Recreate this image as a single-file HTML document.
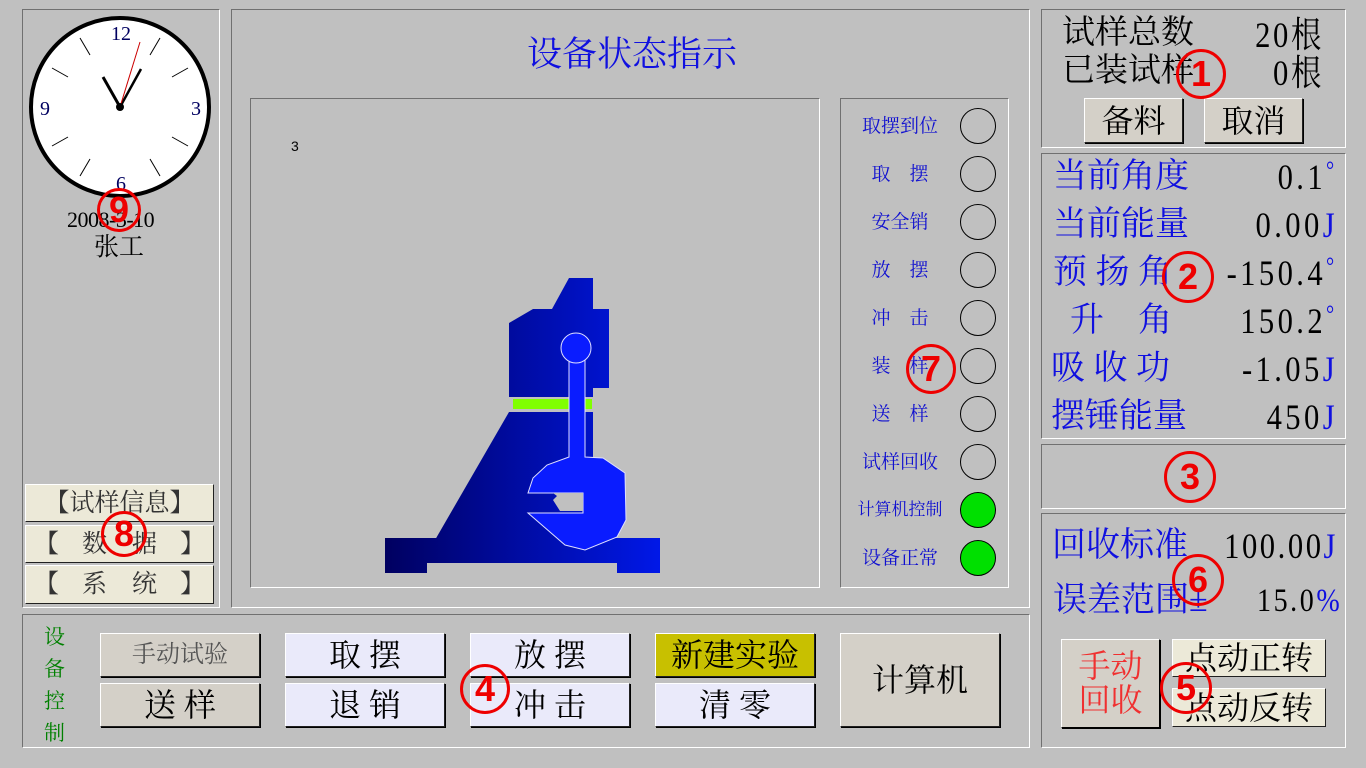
<!DOCTYPE html>
<html><head><meta charset="utf-8"><style>
*{margin:0;padding:0;box-sizing:border-box}
body{width:1366px;height:768px;background:#c0c0c0;position:relative;overflow:hidden;font-family:"Liberation Serif","Noto Serif CJK SC",serif}
.p{position:absolute;border:1px solid;border-color:#707070 #fff #fff #707070}
.t{position:absolute;white-space:nowrap;line-height:1}
.v{position:absolute;white-space:nowrap;line-height:1;right:28px;font-size:36px;transform:scaleX(0.85);transform-origin:right center;letter-spacing:4px}
.b{position:absolute;border:1px solid;border-color:#fff #202020 #202020 #fff;box-shadow:1px 1px 0 #000;display:flex;align-items:center;justify-content:center;white-space:nowrap;line-height:1}
.bl{color:#1010e0}
.red{position:absolute;color:#e00;font-family:"Liberation Sans","Noto Sans CJK SC",sans-serif;font-weight:bold;width:46px;height:46px;border:3px solid #e00;border-radius:50%;display:flex;align-items:center;justify-content:center;font-size:36px;line-height:1}
.led{position:absolute;width:36px;height:36px;border:1px solid #000;border-radius:50%;left:960px}
.lab{position:absolute;left:845px;width:110px;text-align:center;color:#1010d0;font-size:19px;line-height:1}
</style></head><body>
<div class="p" style="left:22px;top:9px;width:198px;height:599px"></div>
<div class="p" style="left:231px;top:9px;width:799px;height:599px"></div>
<div class="p" style="left:250px;top:98px;width:570px;height:490px"></div>
<div class="p" style="left:840px;top:98px;width:169px;height:490px"></div>
<div class="p" style="left:1041px;top:9px;width:305px;height:139px"></div>
<div class="p" style="left:1041px;top:153px;width:305px;height:286px"></div>
<div class="p" style="left:1041px;top:444px;width:305px;height:65px"></div>
<div class="p" style="left:1041px;top:513px;width:305px;height:235px"></div>
<div class="p" style="left:22px;top:614px;width:1008px;height:134px"></div>

<svg style="position:absolute;left:0;top:0" width="240" height="200">
<circle cx="120" cy="107" r="89" fill="#fff" stroke="#000" stroke-width="4"/>
<g stroke="#000" stroke-width="1">
<line x1="150" y1="55" x2="160" y2="38"/><line x1="172" y1="77" x2="188" y2="68"/>
<line x1="172" y1="137" x2="188" y2="146"/><line x1="150" y1="159" x2="160" y2="176"/>
<line x1="90" y1="159" x2="80" y2="176"/><line x1="68" y1="137" x2="52" y2="146"/>
<line x1="68" y1="77" x2="52" y2="68"/><line x1="90" y1="55" x2="80" y2="38"/>
</g>
<g fill="#000060" font-family="Liberation Serif" font-size="20" text-anchor="middle">
<text x="121" y="40">12</text><text x="196" y="115">3</text><text x="45" y="115">9</text><text x="121" y="190">6</text>
</g>
<line x1="120" y1="107" x2="103" y2="77" stroke="#000" stroke-width="3"/>
<line x1="120" y1="107" x2="141" y2="69" stroke="#000" stroke-width="2.5"/>
<line x1="120" y1="107" x2="140" y2="42" stroke="#c00" stroke-width="1"/>
<circle cx="120" cy="107" r="4" fill="#000"/>
</svg>
<div class="t" style="left:67px;top:209px;font-size:22px;letter-spacing:-0.5px">2008-3-10</div>
<div class="t" style="left:94px;top:235px;font-size:25px">张工</div>
<div class="red" style="left:97px;top:188px;width:44px;height:44px">9</div>

<div class="b" style="left:25px;top:484px;width:189px;height:38px;background:#ece9d8;font-size:25px;color:#333;box-shadow:none">【试样信息】</div>
<div class="b" style="left:25px;top:525px;width:189px;height:38px;background:#ece9d8;font-size:25px;color:#333;box-shadow:none;justify-content:space-between;padding:0 8px">【<span>数&nbsp;&nbsp;&nbsp;&nbsp;据</span>】</div>
<div class="b" style="left:25px;top:565px;width:189px;height:39px;background:#ece9d8;font-size:25px;color:#333;box-shadow:none;justify-content:space-between;padding:0 8px">【<span>系&nbsp;&nbsp;&nbsp;&nbsp;统</span>】</div>
<div class="red" style="left:101px;top:511px;width:46px;height:46px">8</div>

<div class="t bl" style="left:527px;top:37px;font-size:35px">设备状态指示</div>
<div class="t" style="left:291px;top:139px;font-size:14px;font-family:'Liberation Sans',sans-serif">3</div>
<svg style="position:absolute;left:0;top:0" width="820" height="600">
<defs><linearGradient id="g" x1="385" x2="660" y1="0" y2="0" gradientUnits="userSpaceOnUse"><stop offset="0" stop-color="#000060"/><stop offset="1" stop-color="#0018e8"/></linearGradient></defs>
<polygon fill="url(#g)" points="569,278 593,278 593,309 609,309 609,388 593,388 593,397 509,397 509,323 533,309 552,309"/>
<polygon fill="url(#g)" points="509,412 593,412 593,540 435,540 "/>
<polygon fill="url(#g)" points="385,538 660,538 660,573 617,573 617,563 427,563 427,573 385,573"/>
<rect x="513" y="399" width="79" height="10" fill="#80ff00"/>
<g fill="#0a1cff" stroke="#e0e0ff" stroke-width="1">
<polygon points="569,360 585,360 585,457 603,458 625,473 626,520 617,537 585,550 565,545 528,513 583,513 583,493 528,493 533,478 547,465 569,457"/>
<circle cx="576" cy="348" r="15"/>
</g>
<polygon fill="#c0c0c0" points="553,493 583,493 583,511 560,511 553,500 557,496"/>
</svg>

<div class="lab" style="top:117px">取摆到位</div><div class="led" style="top:108px"></div>
<div class="lab" style="top:165px">取　摆</div><div class="led" style="top:156px"></div>
<div class="lab" style="top:213px">安全销</div><div class="led" style="top:204px"></div>
<div class="lab" style="top:261px">放　摆</div><div class="led" style="top:252px"></div>
<div class="lab" style="top:309px">冲　击</div><div class="led" style="top:300px"></div>
<div class="lab" style="top:357px">装　样</div><div class="led" style="top:348px"></div>
<div class="lab" style="top:405px">送　样</div><div class="led" style="top:396px"></div>
<div class="lab" style="top:453px">试样回收</div><div class="led" style="top:444px"></div>
<div class="lab" style="top:501px;font-size:17px">计算机控制</div><div class="led" style="top:492px;background:#00e000"></div>
<div class="lab" style="top:549px">设备正常</div><div class="led" style="top:540px;background:#00e000"></div>
<div class="red" style="left:906px;top:344px;width:50px;height:50px">7</div>

<div class="t" style="left:1062px;top:17px;font-size:33px">试样总数</div>
<div class="v" style="right:42px;top:17px;letter-spacing:3px">20根</div>
<div class="t" style="left:1062px;top:55px;font-size:33px">已装试样</div>
<div class="v" style="right:42px;top:55px;letter-spacing:3px">0根</div>
<div class="b" style="left:1084px;top:98px;width:99px;height:45px;background:#d4d0c8;font-size:32px">备料</div>
<div class="b" style="left:1204px;top:98px;width:99px;height:45px;background:#d4d0c8;font-size:32px">取消</div>
<div class="red" style="left:1176px;top:49px;width:50px;height:50px">1</div>

<div class="t bl" style="left:1053px;top:160px;font-size:34px">当前角度</div><div class="v" style="top:159px">0.1<span class="bl" style="font-size:24px;vertical-align:top">°</span></div>
<div class="t bl" style="left:1053px;top:208px;font-size:34px">当前能量</div><div class="v" style="top:207px">0.00<span class="bl">J</span></div>
<div class="t bl" style="left:1053px;top:256px;font-size:34px">预 扬 角</div><div class="v" style="top:255px">-150.4<span class="bl" style="font-size:24px;vertical-align:top">°</span></div>
<div class="t bl" style="left:1070px;top:304px;font-size:34px">升&nbsp;&nbsp;&nbsp;&nbsp;角</div><div class="v" style="top:303px">150.2<span class="bl" style="font-size:24px;vertical-align:top">°</span></div>
<div class="t bl" style="left:1051px;top:352px;font-size:34px">吸 收 功</div><div class="v" style="top:351px">-1.05<span class="bl">J</span></div>
<div class="t bl" style="left:1051px;top:400px;font-size:34px">摆锤能量</div><div class="v" style="top:399px">450<span class="bl">J</span></div>
<div class="red" style="left:1162px;top:251px;width:52px;height:52px">2</div>

<div class="red" style="left:1164px;top:451px;width:52px;height:52px">3</div>

<div class="t bl" style="left:1052px;top:529px;font-size:34px">回收标准</div><div class="v" style="top:528px;letter-spacing:3px">100.00<span class="bl">J</span></div>
<div class="t bl" style="left:1053px;top:584px;font-size:34px">误差范围±</div><div class="v" style="top:585px;font-size:33px;letter-spacing:3px;right:24px">15.0<span class="bl">%</span></div>
<div class="red" style="left:1172px;top:554px;width:52px;height:52px">6</div>
<div class="b" style="left:1061px;top:639px;width:99px;height:89px;background:#d4d0c8;font-size:32px;color:#f03030;flex-direction:column;line-height:1.05;border-color:#fff #000 #000 #fff">手动<br>回收</div>
<div class="b" style="left:1172px;top:639px;width:154px;height:38px;background:#ece9d8;font-size:32px;box-shadow:none">点动正转</div>
<div class="b" style="left:1172px;top:688px;width:154px;height:39px;background:#ece9d8;font-size:32px;box-shadow:none">点动反转</div>
<div class="red" style="left:1160px;top:662px;width:52px;height:52px">5</div>

<div class="t" style="left:44px;top:621px;font-size:21px;color:#008000;line-height:32px;width:24px;white-space:normal">设备控制</div>
<div class="b" style="left:100px;top:633px;width:160px;height:44px;background:#d4d0c8;font-size:24px;color:#555">手动试验</div>
<div class="b" style="left:100px;top:683px;width:160px;height:44px;background:#d4d0c8;font-size:32px">送 样</div>
<div class="b" style="left:285px;top:633px;width:160px;height:44px;background:#eaeafa;font-size:32px">取 摆</div>
<div class="b" style="left:285px;top:683px;width:160px;height:44px;background:#eaeafa;font-size:32px">退 销</div>
<div class="b" style="left:470px;top:633px;width:160px;height:44px;background:#eaeafa;font-size:32px">放 摆</div>
<div class="b" style="left:470px;top:683px;width:160px;height:44px;background:#eaeafa;font-size:32px">冲 击</div>
<div class="b" style="left:655px;top:633px;width:160px;height:44px;background:#c8c000;font-size:32px">新建实验</div>
<div class="b" style="left:655px;top:683px;width:160px;height:44px;background:#eaeafa;font-size:32px">清 零</div>
<div class="b" style="left:840px;top:633px;width:160px;height:94px;background:#d4d0c8;font-size:32px">计算机</div>
<div class="red" style="left:460px;top:664px;width:50px;height:50px">4</div>
</body></html>
